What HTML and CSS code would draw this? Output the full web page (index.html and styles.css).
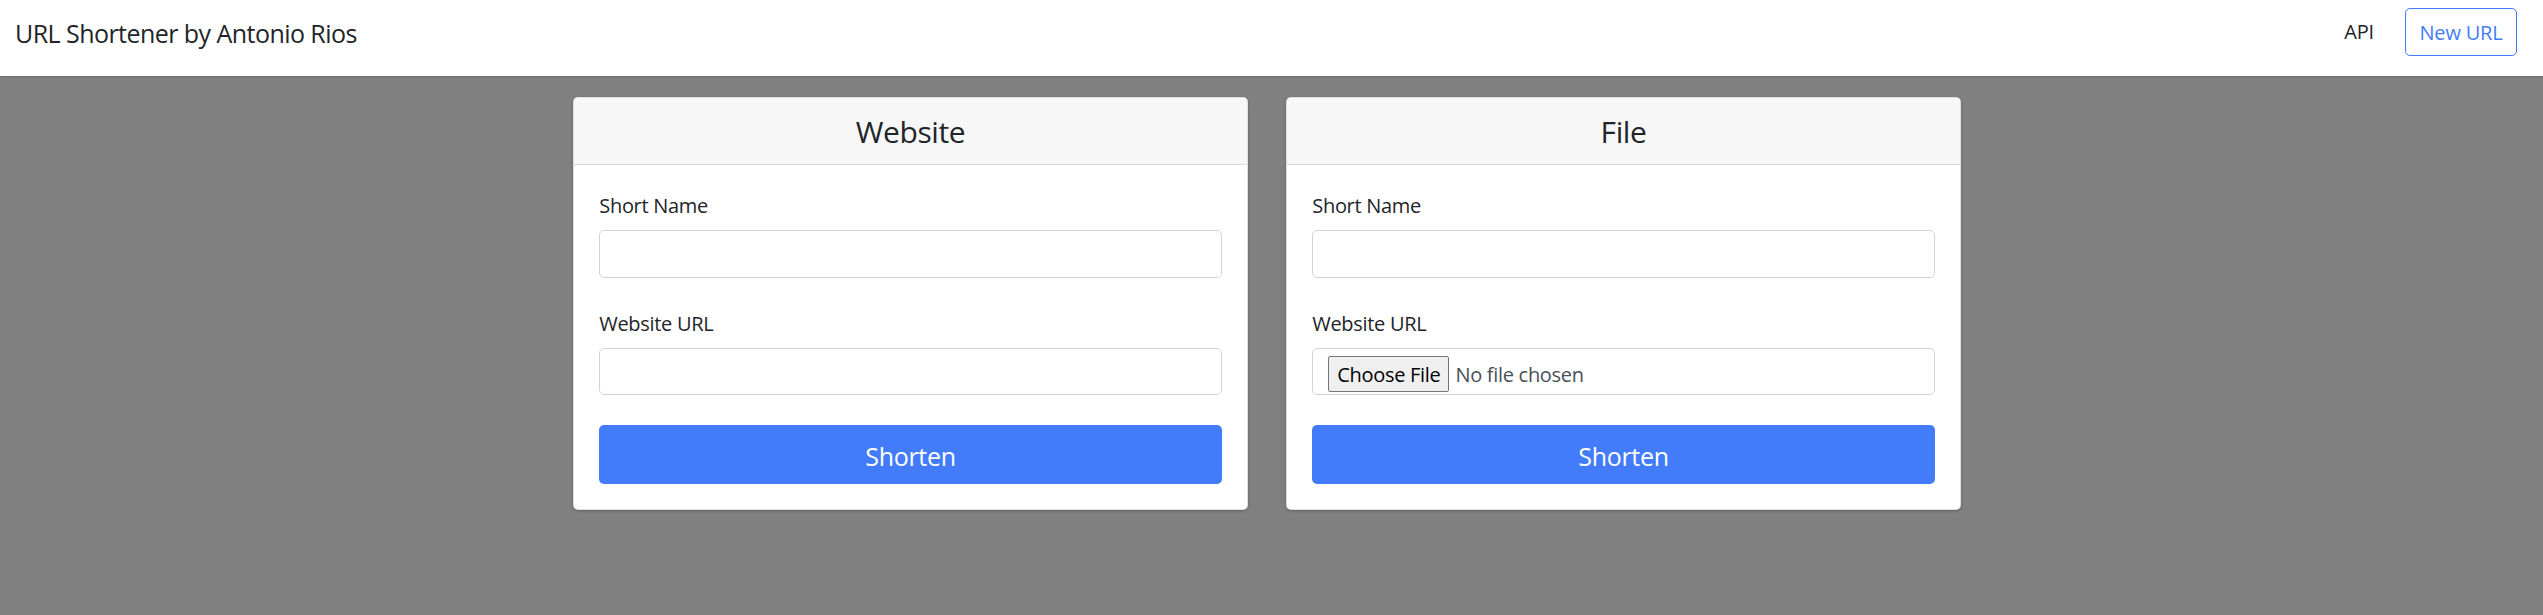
FILE: index.html
```html
<!DOCTYPE html>
<html lang="en">
<head>
<meta charset="utf-8">
<title>URL Shortener by Antonio Rios</title>
<link rel="stylesheet" href="styles.css">
</head>
<body>
<nav class="navbar">
  <a class="brand" href="#">URL Shortener by Antonio Rios</a>
  <div class="nav-right">
    <a class="nav-link" href="#">API</a>
    <a class="btn-outline" href="#">New URL</a>
  </div>
</nav>
<main class="cards">
  <section class="card">
    <h4 class="card-header">Website</h4>
    <form class="card-body">
      <div class="form-group">
        <label class="label">Short Name</label>
        <input class="form-control" type="text">
      </div>
      <div class="form-group">
        <label class="label">Website URL</label>
        <input class="form-control" type="text">
      </div>
      <button class="btn-primary" type="button">Shorten</button>
    </form>
  </section>
  <section class="card">
    <h4 class="card-header">File</h4>
    <form class="card-body">
      <div class="form-group">
        <label class="label">Short Name</label>
        <input class="form-control" type="text">
      </div>
      <div class="form-group">
        <label class="label">Website URL</label>
        <input class="form-control file-control" type="file">
      </div>
      <button class="btn-primary" type="button">Shorten</button>
    </form>
  </section>
</main>
</body>
</html>
```
FILE: styles.css
```css
* { box-sizing: border-box; }
html, body { height: 100%; }
body {
  margin: 0;
  background: #808080;
  font-family: "Open Sans", "Noto Sans", sans-serif;
  color: #212529;
}
.navbar {
  display: flex;
  justify-content: space-between;
  align-items: flex-start;
  height: 76px;
  padding: 8px 26px 0 15px;
  background: #fff;
  box-shadow: 0 1px 2px rgba(0,0,0,0.15);
}
.brand {
  font-size: 25px;
  line-height: 48px;
  padding-top: 1px;
  color: #212529;
  text-decoration: none;
  letter-spacing: -0.55px;
}
.nav-right {
  display: flex;
  align-items: center;
}
.nav-link {
  font-size: 20px;
  line-height: 48px;
  color: #212529;
  text-decoration: none;
  margin-right: 31px;
  letter-spacing: -0.2px;
}
.btn-outline {
  display: flex;
  align-items: center;
  justify-content: center;
  width: 112px;
  height: 48px;
  border: 1px solid #437cfb;
  border-radius: 5px;
  color: #437cfb;
  font-size: 20px;
  text-decoration: none;
  letter-spacing: -0.2px;
}
.cards {
  display: flex;
  justify-content: center;
  align-items: flex-start;
  gap: 38.5px;
  padding: 21px 9px 0 0;
}
.card {
  width: 674.5px;
  background: #fff;
  border: 1px solid rgba(0,0,0,0.125);
  border-radius: 5px;
  box-shadow: 0 1px 3px rgba(0,0,0,0.25);
  overflow: hidden;
}
.card-header {
  margin: 0;
  padding: 16px 25px 14px;
  background: #f7f7f7;
  border-bottom: 1px solid rgba(0,0,0,0.125);
  text-align: center;
  font-size: 30px;
  line-height: 36px;
  font-weight: 400;
  letter-spacing: -0.4px;
}
.card-body {
  padding: 25px;
  margin: 0;
}
.form-group {
  margin-bottom: 30px;
}
.label {
  display: block;
  font-size: 20px;
  line-height: 30px;
  padding-top: 1px;
  margin-bottom: 9px;
  letter-spacing: -0.3px;
}
.form-control {
  display: block;
  width: 100%;
  height: 47.5px;
  padding: 7.5px 15px;
  border: 1px solid #ced4da;
  border-radius: 5px;
  font-family: inherit;
  font-size: 20px;
  line-height: 30px;
  color: #495057;
  background: #fff;
}
.file-control {
  overflow: visible;
  letter-spacing: -0.3px;
}
.file-control::file-selector-button {
  height: 36px;
  margin: 0 6px 0 0;
  padding: 0 8px;
  border: 1px solid #767676;
  border-radius: 2px;
  background: #efefef;
  color: #000;
  font-family: inherit;
  font-size: 20px;
  letter-spacing: -0.3px;
}
.btn-primary {
  display: block;
  width: 100%;
  height: 59px;
  padding: 2px 0 0;
  border: none;
  border-radius: 5px;
  background: #437cfb;
  color: #fff;
  font-family: inherit;
  font-size: 25px;
  letter-spacing: -0.3px;
}
```
